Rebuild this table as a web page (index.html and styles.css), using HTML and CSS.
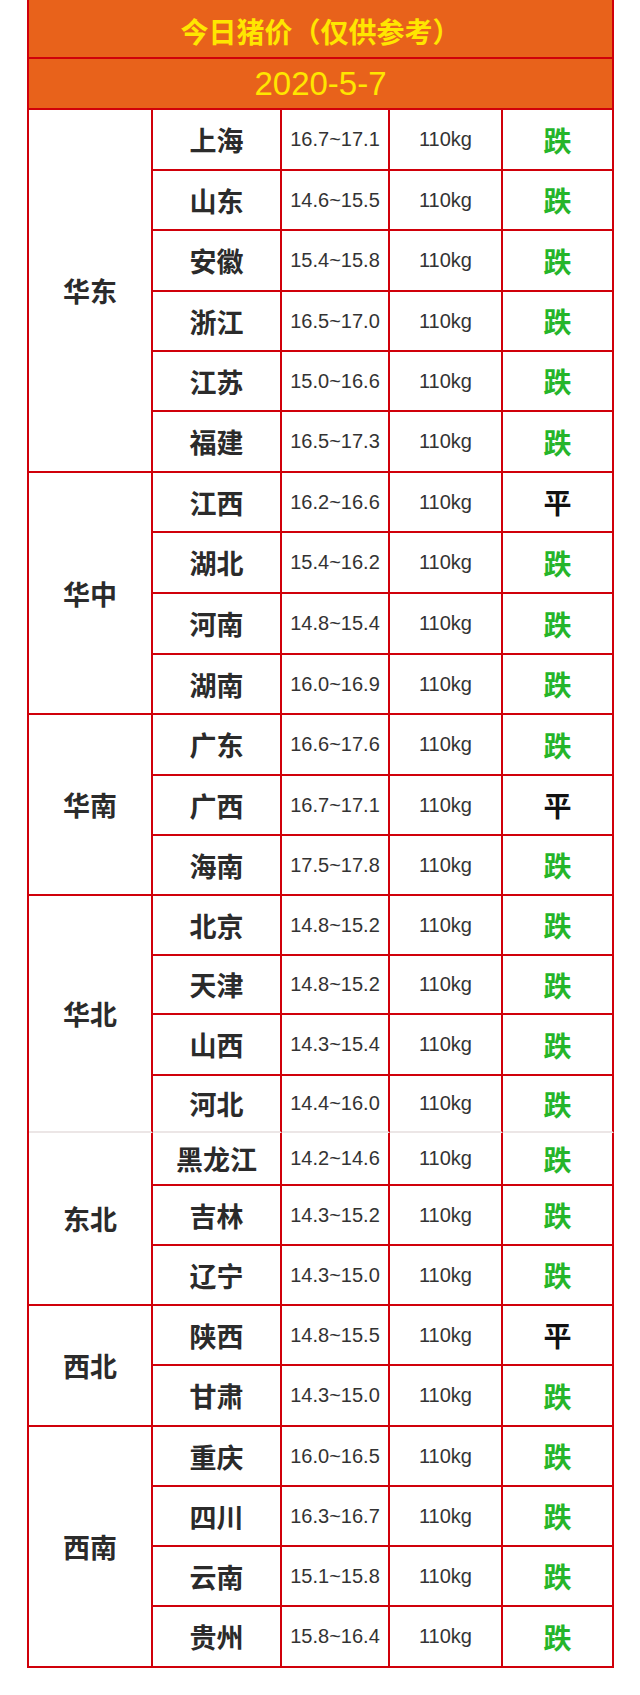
FILE: index.html
```html
<!DOCTYPE html>
<html lang="zh-CN">
<head>
<meta charset="utf-8">
<title>今日猪价</title>
<link rel="stylesheet" href="styles.css">
</head>
<body>
<div class="sheet">
  <div class="cell head title">今日猪价（仅供参考）</div>
  <div class="cell head date">2020-5-7</div>

  <div class="cell region r6">华东</div>
  <div class="cell prov h61">上海</div><div class="cell num">16.7~17.1</div><div class="cell num">110kg</div><div class="cell trend down">跌</div>
  <div class="cell prov h60">山东</div><div class="cell num">14.6~15.5</div><div class="cell num">110kg</div><div class="cell trend down">跌</div>
  <div class="cell prov h61">安徽</div><div class="cell num">15.4~15.8</div><div class="cell num">110kg</div><div class="cell trend down">跌</div>
  <div class="cell prov h60">浙江</div><div class="cell num">16.5~17.0</div><div class="cell num">110kg</div><div class="cell trend down">跌</div>
  <div class="cell prov h60">江苏</div><div class="cell num">15.0~16.6</div><div class="cell num">110kg</div><div class="cell trend down">跌</div>
  <div class="cell prov h61">福建</div><div class="cell num">16.5~17.3</div><div class="cell num">110kg</div><div class="cell trend down">跌</div>

  <div class="cell region r4">华中</div>
  <div class="cell prov h60">江西</div><div class="cell num">16.2~16.6</div><div class="cell num">110kg</div><div class="cell trend flat">平</div>
  <div class="cell prov h61">湖北</div><div class="cell num">15.4~16.2</div><div class="cell num">110kg</div><div class="cell trend down">跌</div>
  <div class="cell prov h61">河南</div><div class="cell num">14.8~15.4</div><div class="cell num">110kg</div><div class="cell trend down">跌</div>
  <div class="cell prov h60">湖南</div><div class="cell num">16.0~16.9</div><div class="cell num">110kg</div><div class="cell trend down">跌</div>

  <div class="cell region r3">华南</div>
  <div class="cell prov h61">广东</div><div class="cell num">16.6~17.6</div><div class="cell num">110kg</div><div class="cell trend down">跌</div>
  <div class="cell prov h60">广西</div><div class="cell num">16.7~17.1</div><div class="cell num">110kg</div><div class="cell trend flat">平</div>
  <div class="cell prov h60">海南</div><div class="cell num">17.5~17.8</div><div class="cell num">110kg</div><div class="cell trend down">跌</div>

  <div class="cell region r4 seam">华北</div>
  <div class="cell prov h60">北京</div><div class="cell num">14.8~15.2</div><div class="cell num">110kg</div><div class="cell trend down">跌</div>
  <div class="cell prov h59">天津</div><div class="cell num">14.8~15.2</div><div class="cell num">110kg</div><div class="cell trend down">跌</div>
  <div class="cell prov h61">山西</div><div class="cell num">14.3~15.4</div><div class="cell num">110kg</div><div class="cell trend down">跌</div>
  <div class="cell prov h57 seam">河北</div><div class="cell num seam">14.4~16.0</div><div class="cell num seam">110kg</div><div class="cell trend down seam">跌</div>

  <div class="cell region r3">东北</div>
  <div class="cell prov h53">黑龙江</div><div class="cell num">14.2~14.6</div><div class="cell num">110kg</div><div class="cell trend down">跌</div>
  <div class="cell prov h60">吉林</div><div class="cell num">14.3~15.2</div><div class="cell num">110kg</div><div class="cell trend down">跌</div>
  <div class="cell prov h60">辽宁</div><div class="cell num">14.3~15.0</div><div class="cell num">110kg</div><div class="cell trend down">跌</div>

  <div class="cell region r2">西北</div>
  <div class="cell prov h60">陕西</div><div class="cell num">14.8~15.5</div><div class="cell num">110kg</div><div class="cell trend flat">平</div>
  <div class="cell prov h61">甘肃</div><div class="cell num">14.3~15.0</div><div class="cell num">110kg</div><div class="cell trend down">跌</div>

  <div class="cell region r4">西南</div>
  <div class="cell prov h60">重庆</div><div class="cell num">16.0~16.5</div><div class="cell num">110kg</div><div class="cell trend down">跌</div>
  <div class="cell prov h60">四川</div><div class="cell num">16.3~16.7</div><div class="cell num">110kg</div><div class="cell trend down">跌</div>
  <div class="cell prov h60">云南</div><div class="cell num">15.1~15.8</div><div class="cell num">110kg</div><div class="cell trend down">跌</div>
  <div class="cell prov h61">贵州</div><div class="cell num">15.8~16.4</div><div class="cell num">110kg</div><div class="cell trend down">跌</div>
</div>
</body>
</html>
```

FILE: styles.css
```css
html, body {
  margin: 0;
  padding: 0;
  background: #ffffff;
}

body {
  height: 1695px;
  font-family: "Noto Sans CJK SC", "Liberation Sans", sans-serif;
  color: #333333;
}

.sheet {
  box-sizing: border-box;
  width: 587px;
  margin-left: 27px;
  border-left: 2px solid #d0000a;
  display: grid;
  grid-template-columns: 124px 129px 108px 113px 111px;
  grid-auto-rows: auto;
}

.cell {
  box-sizing: border-box;
  border-right: 2px solid #d0000a;
  border-bottom: 2px solid #d0000a;
  display: flex;
  align-items: center;
  justify-content: center;
  background: #ffffff;
}

.head {
  grid-column: 1 / -1;
  background: #e8621b;
  color: #ffe600;
}

.title {
  height: 59px;
  font-size: 28px;
  font-weight: 700;
  padding-top: 4px;
}

.date {
  height: 51px;
  font-family: "Liberation Sans", sans-serif;
  font-size: 33px;
}

.region {
  grid-column: 1;
  font-size: 27px;
  font-weight: 700;
  color: #2b2b2b;
}

.r6 { grid-row: span 6; }
.r4 { grid-row: span 4; }
.r3 { grid-row: span 3; }
.r2 { grid-row: span 2; }

.prov {
  grid-column: 2;
  font-size: 27px;
  font-weight: 700;
  color: #2b2b2b;
}

.h61 { height: 61px; }
.h60 { height: 60px; }
.h59 { height: 59px; }
.h57 { height: 57px; }
.h53 { height: 53px; }

.num {
  font-family: "Liberation Sans", sans-serif;
  font-size: 20px;
  color: #333333;
}

.trend {
  font-size: 28px;
  font-weight: 700;
}

.down {
  color: #25b52a;
}

.flat {
  color: #111111;
}

.seam {
  border-bottom-color: #ece6e6;
}
```
